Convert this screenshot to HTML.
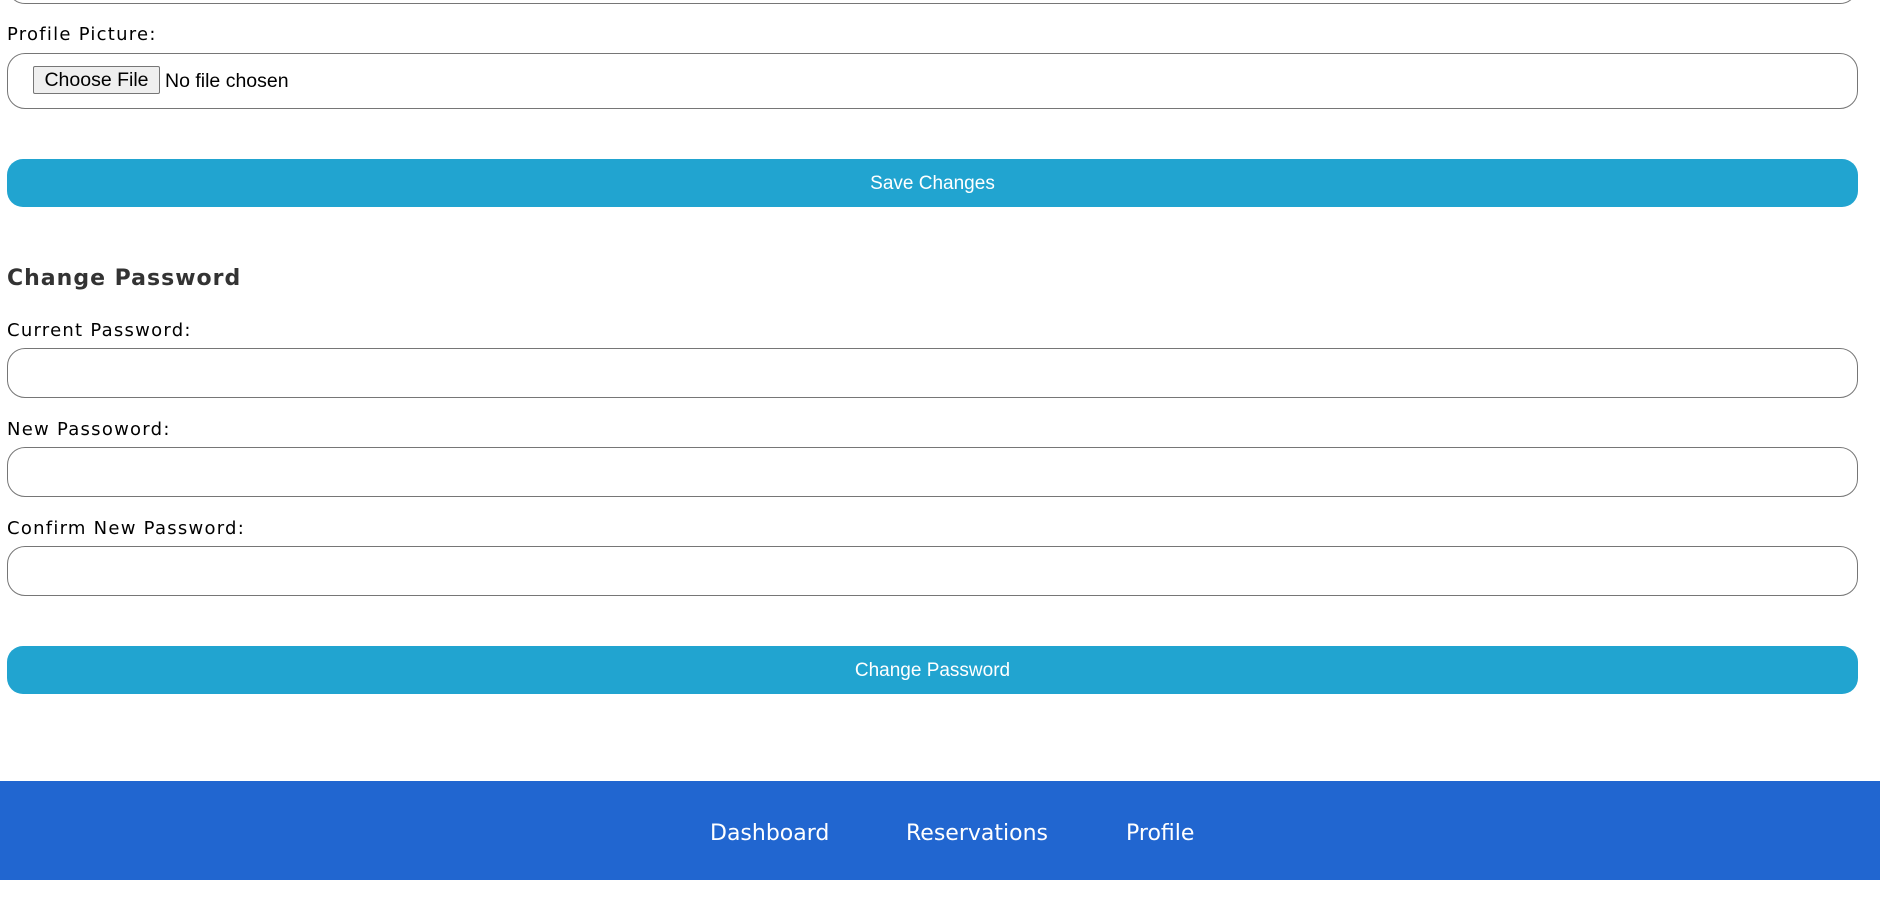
<!DOCTYPE html>
<html><head><meta charset="utf-8"><style>
html,body{margin:0;padding:0;width:1880px;height:899px;background:#fff;overflow:hidden;position:relative}
.a{position:absolute}
.lbl{font-family:"DejaVu Sans",sans-serif;font-size:18px;letter-spacing:1.25px;color:#000;left:7px;line-height:22px}
.inp{left:7px;width:1851px;border:1px solid #767676;border-radius:18px;box-sizing:border-box;background:#fff}
.btn{left:7px;width:1851px;height:48px;background:#21a4d0;border-radius:16px;color:#fff;font-family:"Liberation Sans",Arial,sans-serif;font-size:19px;text-align:center;line-height:50px}
.nav{font-family:"DejaVu Sans",sans-serif;font-size:22px;color:#fff;top:820px;line-height:28px}
</style></head><body>
<div class="a inp" style="top:-40px;height:44px"></div>
<div class="a lbl" style="top:24px">Profile Picture:</div>
<div class="a inp" style="top:53px;height:56px"></div>
<div class="a" style="left:33px;top:66px;width:127px;height:28px;border:1px solid #767676;border-radius:2px;background:#efefef;box-sizing:border-box;font-family:'Liberation Sans',Arial,sans-serif;font-size:19.5px;line-height:27px;text-align:center;color:#000">Choose File</div>
<div class="a" style="left:165px;top:67px;font-family:'Liberation Sans',Arial,sans-serif;font-size:19.5px;line-height:28px;color:#000">No file chosen</div>
<div class="a btn" style="top:159px">Save Changes</div>
<div class="a" style="left:7px;top:265px;font-family:'DejaVu Sans',sans-serif;font-weight:bold;font-size:22px;letter-spacing:1px;color:#333;line-height:28px">Change Password</div>
<div class="a lbl" style="top:320px">Current Password:</div>
<div class="a inp" style="top:348px;height:50px"></div>
<div class="a lbl" style="top:419px">New Passoword:</div>
<div class="a inp" style="top:447px;height:50px"></div>
<div class="a lbl" style="top:518px">Confirm New Password:</div>
<div class="a inp" style="top:546px;height:50px"></div>
<div class="a btn" style="top:646px">Change Password</div>
<div class="a" style="left:0;top:781px;width:1880px;height:99px;background:#2166d0"></div>
<div class="a nav" style="left:710px">Dashboard</div>
<div class="a nav" style="left:906px">Reservations</div>
<div class="a nav" style="left:1126px">Profile</div>
</body></html>
